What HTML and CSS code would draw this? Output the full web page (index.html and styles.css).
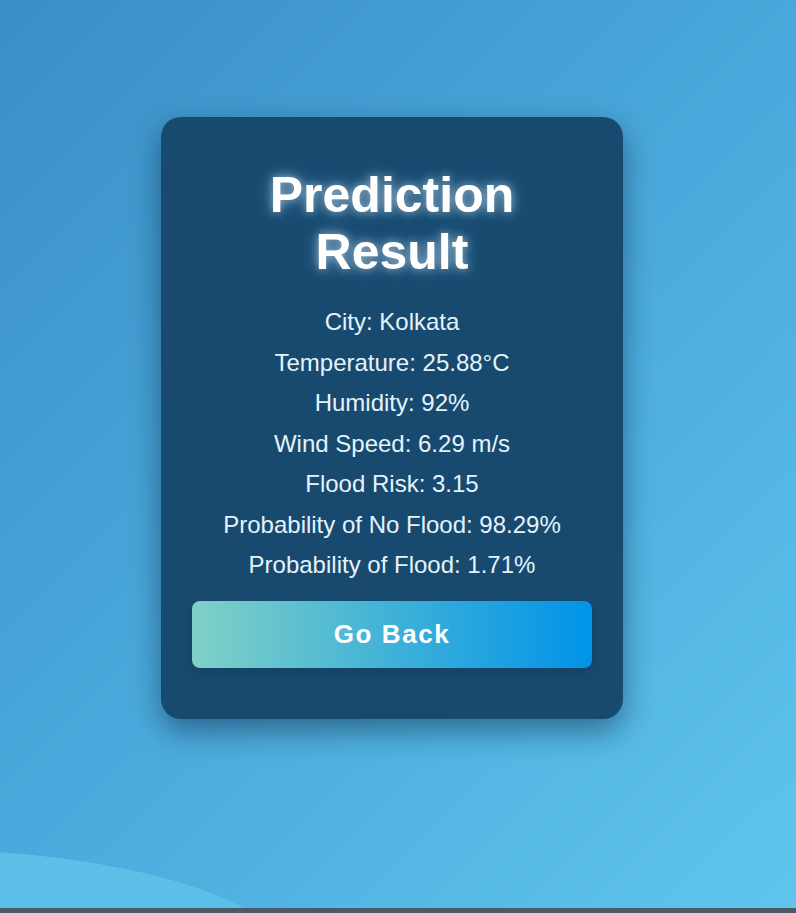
FILE: index.html
```html
<!DOCTYPE html>
<html lang="en">
<head>
<meta charset="utf-8">
<title>Prediction Result</title>
<link rel="stylesheet" href="styles.css">
</head>
<body>
<main class="page">
  <section class="card">
    <h1 class="title">Prediction Result</h1>
    <div class="results">
      <p>City: Kolkata</p>
      <p>Temperature: 25.88°C</p>
      <p>Humidity: 92%</p>
      <p>Wind Speed: 6.29 m/s</p>
      <p>Flood Risk: 3.15</p>
      <p>Probability of No Flood: 98.29%</p>
      <p>Probability of Flood: 1.71%</p>
    </div>
    <a class="back-btn" href="#">Go Back</a>
  </section>
</main>
<div class="bottom-bar"></div>
</body>
</html>
```

FILE: styles.css
```css
html, body {
  margin: 0;
  padding: 0;
}

body {
  font-family: "Liberation Sans", Arial, sans-serif;
  overflow: hidden;
}

.page {
  height: 908px;
  box-sizing: border-box;
  padding: 117px 12px 0 0;
  display: flex;
  justify-content: center;
  align-items: flex-start;
  background:
    radial-gradient(ellipse 390px 112px at -100px 960px, #5bbfe8 99.4%, rgba(91,191,232,0) 100%),
    linear-gradient(135deg, #3a8ec6 0%, #4aa9dc 50%, #5fc5ed 100%);
}

.card {
  width: 462px;
  box-sizing: border-box;
  padding: 49.5px 31px 51px;
  background: #184a6f;
  border-radius: 20px;
  box-shadow: 0 12px 30px rgba(0, 20, 45, 0.45);
  display: flex;
  flex-direction: column;
  align-items: stretch;
  text-align: center;
}

.title {
  margin: 0 0 26.9px;
  font-size: 50px;
  font-weight: 700;
  line-height: 57.5px;
  color: #ffffff;
  text-shadow: 0 0 10px rgba(255, 255, 255, 0.55), 0 0 20px rgba(120, 200, 255, 0.45);
}

.results {
  display: flex;
  flex-direction: column;
  gap: 12px;
}

.results p {
  margin: 0;
  font-size: 24px;
  line-height: 28.5px;
  color: #e4f3fb;
  white-space: nowrap;
}

.back-btn {
  margin-top: 21.1px;
  height: 67px;
  display: flex;
  align-items: center;
  justify-content: center;
  border-radius: 8px;
  background: linear-gradient(to right, #80d0c7, #0093e9);
  color: #ffffff;
  font-size: 26px;
  font-weight: 700;
  letter-spacing: 1.6px;
  text-decoration: none;
  box-shadow: 0 4px 12px rgba(0, 30, 60, 0.2);
}

.bottom-bar {
  height: 5px;
  background: #4b5a66;
}
```
